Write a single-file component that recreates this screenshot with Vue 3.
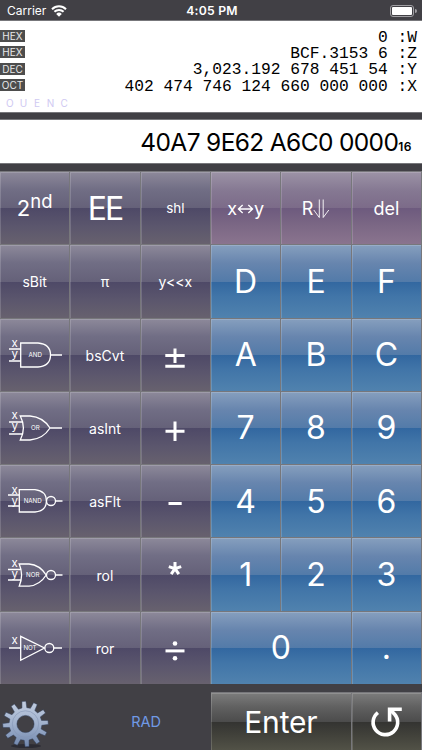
<template>
  <div class="calc">
    <header class="status">
      <div class="status__carrier">
        <span>Carrier</span>
        <svg class="status__wifi" viewBox="0 0 16 12" width="16" height="12">
          <path d="M1 4.2a10 10 0 0 1 14 0" />
          <path d="M3.4 6.8a6.5 6.5 0 0 1 9.2 0" />
          <path class="solid" d="M5.2 8.9a4 4 0 0 1 5.6 0L8 11.8z" />
        </svg>
      </div>
      <div class="status__time">4:05 PM</div>
      <svg class="status__battery" viewBox="0 0 27 12" width="27" height="12">
        <rect x="0.5" y="0.5" width="23" height="11" rx="2.5" class="shell" />
        <rect x="2" y="2" width="20" height="8" rx="1" class="fill" />
        <path d="M25 4v4a2 2 0 0 0 0-4z" class="tip" />
      </svg>
    </header>

    <section class="stack">
      <div v-for="r in registers" :key="r.name" class="stack__row">
        <span class="stack__base">{{ r.base }}</span>
        <span class="stack__value">{{ r.value }} :{{ r.name }}</span>
      </div>
      <div class="stack__flags">
        <span v-for="f in flags" :key="f">{{ f }}</span>
      </div>
    </section>

    <section class="entry">
      <span class="entry__value">40A7 9E62 A6C0 0000</span><span class="entry__base">16</span>
    </section>

    <main class="keys">
      <button v-for="k in keys" :key="k.id" type="button" class="key" :class="[`key--${k.tone}`, k.cls]">
        <svg v-if="k.gate" class="gate" viewBox="0 0 70 73" width="70" height="73">
          <path :d="k.gate.d" />
          <circle v-if="k.gate.cx" :cx="k.gate.cx" cy="37" r="4.5" />
          <text class="gate__pin" x="11.6" :y="k.gate.pinY">x</text>
          <text v-if="k.gate.two" class="gate__pin" x="11.6" :y="k.gate.pinY + 10.8">y</text>
          <text class="gate__name" :x="k.gate.tx" y="39.4">{{ k.gate.name }}</text>
        </svg>
        <svg v-else-if="k.op" class="op" viewBox="0 0 70 73" width="70" height="73">
          <path :d="k.op" />
          <template v-if="k.dots">
            <circle cx="35" cy="32.5" r="2.3" />
            <circle cx="35" cy="47.3" r="2.3" />
          </template>
        </svg>
        <template v-else-if="k.id === '2nd'">
          <span>2</span><span class="key__sup">nd</span>
        </template>
        <template v-else-if="k.id === 'swap'">
          <span>x</span>
          <svg class="swap" viewBox="0 0 18 12" width="17" height="12">
            <path d="M1.5 6h15M6 1.8 1.5 6 6 10.2M12 1.8 16.5 6 12 10.2" />
          </svg>
          <span>y</span>
        </template>
        <template v-else-if="k.id === 'roll'">
          <span>R</span>
          <svg class="roll" viewBox="0 0 17 20" width="17" height="20">
            <path d="M6.3 .5v18M10.2 .5v18M6.3 18.5.8 11M10.2 18.5 15.8 11" />
          </svg>
        </template>
        <span v-else>{{ k.label }}</span>
      </button>
    </main>

    <footer class="bottom">
      <button type="button" class="bottom__settings" aria-label="Settings">
        <svg viewBox="0 0 50 52" width="50" height="52">
          <defs>
            <linearGradient id="gear" x1="0" y1="0" x2="0" y2="1">
              <stop offset="0" stop-color="#c3cee0" />
              <stop offset="0.5" stop-color="#a0b1cd" />
              <stop offset="1" stop-color="#7187ad" />
            </linearGradient>
          </defs>
          <ellipse cx="26" cy="48" rx="15" ry="2" class="gear-shadow" />
          <path :d="gearPath" fill="url(#gear)" fill-rule="evenodd" class="gear" />
          <circle cx="25.5" cy="26" r="13.2" class="gear-ring" />
        </svg>
      </button>
      <div class="bottom__mode">RAD</div>
      <button type="button" class="key key--dark key--enter">Enter</button>
      <button type="button" class="key key--dark key--undo" aria-label="Undo">
        <svg class="undo" viewBox="0 0 70 58" width="70" height="58">
          <path d="M26.9 19.6A12.3 12.3 0 1 0 43.6 21.2L39.6 17" />
          <path d="M38.6 28.5V16.2H50.8" />
        </svg>
      </button>
    </footer>
  </div>
</template>

<script setup>
const registers = [
  { name: 'W', base: 'HEX', value: '0' },
  { name: 'Z', base: 'HEX', value: 'BCF.3153 6' },
  { name: 'Y', base: 'DEC', value: '3,023.192 678 451 54' },
  { name: 'X', base: 'OCT', value: '402 474 746 124 660 000 000' },
];
const flags = ['O', 'U', 'E', 'N', 'C'];

const gates = {
  and: {
    name: 'AND', tx: 35.3, pinY: 28.8, two: true,
    d: 'M9 31H20.7M9 43H20.7M20.7 25H38Q50.5 26 50.5 37T38 49H20.7ZM50.5 37H62',
  },
  or: {
    name: 'OR', tx: 35.3, pinY: 28.4, two: true,
    d: 'M9 31H22.5M9 43H22.5M20.3 25H30Q43 26 50 37 43 48 30 49H20.3Q26.5 37 20.3 25ZM50 37H62',
  },
  nand: {
    name: 'NAND', tx: 32.7, pinY: 29.8, two: true, cx: 51,
    d: 'M8 31H19.3M8 42H19.3M19.3 25.7H35Q46.4 27 46.4 37T35 48H19.3ZM55.5 37H62.5',
  },
  nor: {
    name: 'NOR', tx: 32.7, pinY: 29, two: true, cx: 51,
    d: 'M8 31.5H20.5M8 42H20.5M19.2 26H29Q40 27 46.2 37 40 47 29 48.2H19.2Q24 37 19.2 26ZM55.5 37H62.5',
  },
  not: {
    name: 'NOT', tx: 30, pinY: 33.2, two: false, cx: 49.3,
    d: 'M9 37H20.7M20.7 25.3V49.3L44.5 37ZM53.8 37H62',
  },
};

const fn = (id, cls = 'key--small') => ({ id, label: id, tone: 'grey', cls });
const num = (id, cls = '') => ({ id, label: id, tone: 'blue', cls: `key--num ${cls}` });
const gate = (id) => ({ id, tone: 'grey', gate: gates[id] });
const op = (id, d, dots = false) => ({ id, tone: 'grey', op: d, dots });

const keys = [
  fn('2nd', 'key--second'), fn('EE', 'key--ee'), fn('shl', 'key--tiny'),
  { id: 'swap', tone: 'plum' }, { id: 'roll', tone: 'plum' }, { id: 'del', label: 'del', tone: 'plum' },
  fn('sBit'), fn('π'), fn('y<<x'), num('D'), num('E'), num('F'),
  gate('and'), fn('bsCvt'), op('±', 'M25.3 37.5H44.7M35 30.5V45M25.3 48.2H44.7'), num('A'), num('B'), num('C'),
  gate('or'), fn('asInt'), op('+', 'M25.5 40.2H44.5M35 30.5V50'), num('7'), num('8'), num('9'),
  gate('nand'), fn('asFlt'), op('-', 'M28.5 39.5H41.7'), num('4'), num('5'), num('6'),
  gate('nor'), fn('rol'), op('*', 'M35 24V30.7L28.8 28.6M35 30.7 41.2 28.6M35 30.7 31.2 36.2M35 30.7 38.8 36.2'), num('1'), num('2'), num('3'),
  gate('not'), fn('ror'), op('÷', 'M25.5 39.9H44.5', true), num('0', 'key--wide'), num('.'),
];

// twelve-tooth cog with a round hole
const makeGear = (cx, cy) => {
  const teeth = 12;
  const pt = (r, deg) => {
    const a = ((deg - 94) * Math.PI) / 180;
    return `${(cx + r * Math.cos(a)).toFixed(2)} ${(cy + r * Math.sin(a)).toFixed(2)}`;
  };
  const pts = [];
  for (let i = 0; i < teeth; i++) {
    const a = (i * 360) / teeth;
    pts.push(pt(16.4, a - 8.5), pt(22.8, a - 5), pt(22.8, a + 5), pt(16.4, a + 8.5));
  }
  const r = 8.6;
  return `M${pts.join('L')}ZM${cx - r} ${cy}a${r} ${r} 0 1 0 ${r * 2} 0a${r} ${r} 0 1 0 ${-r * 2} 0Z`;
};
const gearPath = makeGear(25.5, 26);
</script>

<style>
body {
  margin: 0;
  background: #414045;
}
</style>

<style scoped>
.calc {
  width: 422px;
  height: 750px;
  display: flex;
  flex-direction: column;
  overflow: hidden;
  background: #414045;
  font-family: Inter, "Liberation Sans", sans-serif;
  color: #fff;
}

.status {
  height: 21px;
  flex-shrink: 0;
  display: grid;
  grid-template-columns: 1fr auto 1fr;
  align-items: center;
  padding: 1px 5px 0 7px;
  box-sizing: border-box;
  border-bottom: 1px solid #77777b;
  font-size: 12px;
}
.status__carrier {
  display: flex;
  align-items: center;
  gap: 5px;
}
.status__wifi path {
  fill: none;
  stroke: #fff;
  stroke-width: 2;
}
.status__wifi .solid {
  fill: #fff;
  stroke: none;
}
.status__time {
  font-weight: 600;
  font-size: 12.2px;
  letter-spacing: 0.25px;
}
.status__battery {
  justify-self: end;
}
.shell {
  fill: none;
  stroke: #a09fa3;
}
.fill {
  fill: #fff;
}
.tip {
  fill: #a09fa3;
}

.stack {
  height: 92px;
  flex-shrink: 0;
  box-sizing: border-box;
  padding-top: 7px;
  background: #fff;
  border-bottom: 1px solid #77777b;
  color: #000;
}
.stack__row {
  height: 16.3px;
  display: flex;
  align-items: center;
  justify-content: space-between;
  padding-right: 5px;
}
.stack__base {
  width: 25px;
  height: 12px;
  padding-top: 1px;
  box-sizing: border-box;
  background: #4d4d4d;
  color: #e8e8e8;
  font-size: 10px;
  line-height: 11px;
  text-align: center;
}
.stack__value {
  padding-top: 3px;
  font-family: "Liberation Mono", monospace;
  font-size: 16.25px;
  line-height: 16px;
  white-space: pre;
}
.stack__flags {
  display: flex;
  padding-left: 3px;
  margin-top: 3px;
  font-size: 10px;
  line-height: 14px;
  color: #cfc9f2;
}
.stack__flags span {
  width: 13.6px;
  text-align: center;
}

.entry {
  height: 45px;
  flex-shrink: 0;
  margin-top: 6px;
  box-sizing: border-box;
  border-top: 1px solid #77777b;
  border-bottom: 1px solid #77777b;
  padding-right: 10px;
  display: flex;
  align-items: baseline;
  justify-content: flex-end;
  background: #fff;
  color: #000;
  line-height: 45px;
}
.entry__value {
  font-size: 24.5px;
  letter-spacing: -0.64px;
}
.entry__base {
  font-size: 12px;
  font-weight: 600;
  letter-spacing: 0.5px;
}

.keys {
  height: 513px;
  flex-shrink: 0;
  margin-top: 7px;
  display: grid;
  grid-template-columns: repeat(6, 1fr);
  grid-template-rows: repeat(7, 1fr);
}
.key {
  min-width: 0;
  min-height: 0;
  margin: 0;
  padding: 1px 0 0;
  border: 0 solid #77777b;
  border-width: 1px 1px 0 0;
  box-shadow: inset 1px 1px 0 rgba(255, 255, 255, 0.16);
  display: flex;
  align-items: center;
  justify-content: center;
  box-sizing: border-box;
  color: #fff;
  font-family: inherit;
  font-size: 18px;
  line-height: 1;
}
.key--grey {
  background: linear-gradient(#8d899a 0%, #716e85 24%, #656179 50%, #4e4967 50.1%, #5b566d 75%, #67616e 100%);
}
.key--plum {
  background: linear-gradient(#9c93a6 0%, #857892 26%, #7c6b89 50%, #6d5a7e 50.1%, #7c6885 75%, #8a748e 100%);
}
.key--blue {
  background: linear-gradient(#869fbe 0%, #6785ae 25%, #537ba9 50%, #3267a0 50.1%, #4175a8 70%, #5082ae 100%);
}
.key--dark {
  background: linear-gradient(#7c7c7c 0%, #606060 25%, #4c4c4c 50%, #333331 50.1%, #42423b 75%, #525247 100%);
}
.key--second {
  padding-top: 0;
  font-size: 22px;
}
.key__sup {
  font-size: 18.5px;
  align-self: flex-start;
  margin-top: 20px;
}
.key--ee {
  font-size: 32px;
  letter-spacing: -2px;
}
.key--tiny {
  font-size: 13.5px;
}
.key--small {
  padding-top: 2px;
  font-size: 14px;
}
.key--num {
  font-size: 32px;
}
.key--wide {
  grid-column: span 2;
}
.key--enter {
  padding-top: 0;
  font-size: 30px;
  letter-spacing: -0.2px;
}
.key--undo {
  padding-top: 0;
}

.gate,
.op {
  flex-shrink: 0;
  margin-top: -2px;
}
.gate path,
.gate circle {
  fill: none;
  stroke: #fff;
  stroke-width: 1.3;
}
.gate text {
  fill: #fff;
}
.gate__pin {
  font-size: 11.5px;
}
.gate__name {
  font-size: 6.2px;
  text-anchor: middle;
}
.op path {
  fill: none;
  stroke: #fff;
  stroke-width: 3;
}
.op circle {
  fill: #fff;
}
.swap path,
.roll path {
  fill: none;
  stroke: #fff;
  stroke-width: 1.4;
}
.roll path {
  stroke-width: 0.9;
}

.bottom {
  height: 58px;
  flex-shrink: 0;
  margin-top: 8px;
  display: grid;
  grid-template-columns: 1fr 1fr 1fr 2fr 1fr;
}
.bottom__settings {
  min-width: 0;
  padding: 6px 0 0;
  border: 0;
  background: none;
  display: flex;
  align-items: flex-start;
}
.gear {
  stroke: #33405c;
  stroke-width: 0.5;
}
.gear-ring {
  fill: none;
  stroke: #8496b5;
  stroke-width: 0.6;
}
.gear-shadow {
  fill: #2c2c34;
}
.bottom__mode {
  grid-column: 2 / 4;
  margin-left: 11px;
  justify-self: center;
  align-self: center;
  font-size: 14.5px;
  color: #709ae6;
}
.undo {
  flex-shrink: 0;
}
.undo path {
  fill: none;
  stroke: #fff;
  stroke-width: 3.6;
}
</style>
